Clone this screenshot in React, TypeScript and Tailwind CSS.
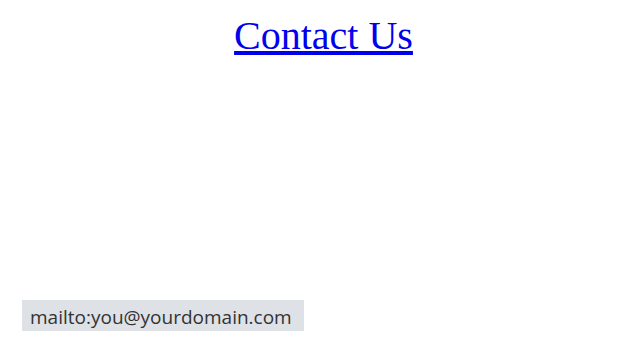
export default function App() {
  return (
    <div className="relative w-[640px] h-[360px] bg-white overflow-hidden">
      <div className="flex justify-center pt-[13px] pl-[7px]">
        <a
          href="mailto:you@yourdomain.com"
          className="text-[40px] leading-[46px] text-[#0000ee] underline"
          style={{ fontFamily: '"Liberation Serif", serif' }}
        >
          Contact Us
        </a>
      </div>
      <div
        className="absolute left-[22px] top-[300px] w-[282px] h-[31px] bg-[#dee1e6] flex items-center pl-[8px] pt-[2px] text-[19px] leading-[24px] text-[#333]"
        style={{ fontFamily: '"Open Sans", sans-serif' }}
      >
        mailto:you@yourdomain.com
      </div>
    </div>
  );
}
